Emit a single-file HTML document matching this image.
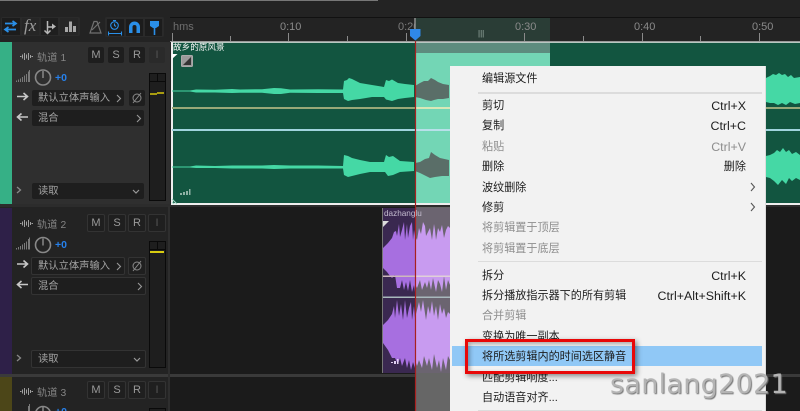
<!DOCTYPE html>
<html><head><meta charset="utf-8">
<style>
html,body{margin:0;padding:0;background:#232323;}
#p{position:relative;width:800px;height:411px;overflow:hidden;background:#232323;font-family:"Liberation Sans","Noto Sans CJK SC",sans-serif;}
.a{position:absolute;}
.t{position:absolute;white-space:nowrap;}
.b{position:absolute;width:16px;height:16px;background:#1e1e1e;border-radius:2px;color:#9a9a9a;font-size:11px;line-height:16px;text-align:center;}
.b2{background:#1f1f1f;border:1px solid #333;width:16px;height:16px;}
.d{position:absolute;background:#1e1e1e;border-radius:2px;color:#a4a4a4;font-size:10.3px;line-height:17px;height:16px;}
.d span{position:absolute;left:6px;top:0;white-space:nowrap;}
.d svg{position:absolute;}
.m{position:absolute;left:482px;font-size:11.1px;line-height:20px;height:20px;color:#1c1c1c;white-space:nowrap;}
.s{position:absolute;right:54px;font-size:12.4px;line-height:20px;height:20px;color:#1c1c1c;white-space:nowrap;}
.g{color:#8e8e8e;}
.sep{position:absolute;left:478px;width:284px;height:1px;background:#dcdcdc;}
.rl{position:absolute;top:21px;font-size:11px;color:#8a8a8a;}
</style></head><body>
<div id="p">
<!-- top bar -->
<div class="a" style="left:0;top:0;width:378px;height:1px;background:#777"></div>
<div class="a" style="left:1px;top:17px;width:79px;height:19px;background:#2a2a2a;border-radius:2px"></div>
<div class="a" style="left:105px;top:17px;width:59px;height:20px;background:#2a2a2a;border-radius:2px"></div>
<div class="a" style="left:2px;top:18px;width:18px;height:17px;background:#1c1c1c"></div>
<div class="a" style="left:22px;top:18px;width:17px;height:17px;background:#262626"></div>
<div class="a" style="left:41px;top:18px;width:17px;height:17px;background:#1f1f1f"></div>
<div class="a" style="left:60px;top:18px;width:18px;height:17px;background:#262626"></div>
<div class="a" style="left:107px;top:19px;width:17px;height:17px;background:#1c1c1c"></div>
<div class="a" style="left:126px;top:19px;width:17px;height:17px;background:#1c1c1c"></div>
<div class="a" style="left:145px;top:19px;width:17px;height:17px;background:#1c1c1c"></div>
<svg class="a" style="left:0;top:0" width="170" height="42" fill="none">
<path d="M5 23.500H15M12.500 21l3.500 2.500-3.500 2.500M16 29.500H6M8.500 27l-3.500 2.500 3.500 2.500" stroke="#2a8fe8" stroke-width="1.700"/>
<path d="M47.500 21V33M47.500 27H52M44.500 30.500l3 3 3-3" stroke="#b8b8b8" stroke-width="1.500"/><path d="M52 23.500l4 3-4 3z" fill="#b8b8b8"/>
<path d="M65 32V27h3v5zM69 32V21.500h3v10.500zM73 32V26h3v6z" fill="#a8a8a8"/>
<path d="M94 21.500h3l4 11.500H90zM92 30l8-8" stroke="#707070" stroke-width="1.200"/>
<circle cx="114.500" cy="25.500" r="3.800" stroke="#2a8fe8" stroke-width="1.100"/><path d="M114.500 23.500V25.500l1.500 1M113 20.500h3M108 33.500h14M108.500 31.500v4M121.500 31.500v4" stroke="#2a8fe8" stroke-width="1.100"/>
<path d="M129 33v-6a5.500 5.500 0 0 1 11 0v6h-3.500v-6a2 2 0 0 0-4 0v6z" fill="#2a8fe8"/>
<path d="M150 21h9v5l-3 2h-3l-3-2z" fill="#2a8fe8"/><path d="M154.500 28v7" stroke="#2a8fe8" stroke-width="1.600"/>
</svg>
<div class="t" style="left:24px;top:16px;font:italic 17px 'Liberation Serif',serif;color:#9c9c9c">fx</div>
<!-- ruler -->
<div class="a" style="left:170px;top:17px;width:630px;height:1px;background:#111"></div>
<div class="a" style="left:170px;top:18px;width:630px;height:23px;background:#232323"></div>
<div class="a" style="left:415px;top:18px;width:135px;height:23px;background:#2a3d36"></div>
<div class="t" style="left:173px;top:21px;font-size:11px;color:#6e6e6e">hms</div>
<div class="rl" style="left:280px">0:10</div>
<div class="a" style="left:398px;top:21px;width:17px;height:14px;overflow:hidden;font-size:11px;color:#7c7c7c">0:20</div>
<div class="rl" style="left:515px">0:30</div>
<div class="rl" style="left:634px">0:40</div>
<div class="rl" style="left:752px">0:50</div>
<div class="t" style="left:478px;top:29px;font-size:8px;color:#9fb0a8">|||</div>
<svg class="a" style="left:170px;top:18px" width="630" height="24">
<path d="M2.500 15V23M60.500 18V23M118.500 15V23M177.500 18V23M236.500 15V23M354.500 15V23M413.500 18V23M472.500 15V23M530.500 18V23M589.500 15V23" stroke="#8a8a8a"/>
</svg>
<div class="a" style="left:170px;top:41px;width:630px;height:1px;background:#9a9a9a"></div>
<!-- left panels -->
<div class="a" style="left:0;top:42px;width:170px;height:164px;background:#2f2f2f"></div>
<div class="a" style="left:0;top:42px;width:12px;height:164px;background:#36b086;border-bottom-left-radius:3px"></div>
<div class="a" style="left:0;top:206px;width:170px;height:169px;background:#232323"></div>
<div class="a" style="left:0;top:208px;width:12px;height:166px;background:#2e2048"></div>
<div class="a" style="left:0;top:376px;width:170px;height:35px;background:#232323"></div>
<div class="a" style="left:0;top:376px;width:12px;height:35px;background:#4c4618"></div>
<!-- timeline -->
<div class="a" style="left:170px;top:206px;width:630px;height:205px;background:#1b1b1b"></div>
<div class="a" style="left:0;top:204px;width:800px;height:3px;background:#2c2c2c"></div>
<div class="a" style="left:0;top:374px;width:800px;height:2.500px;background:#3a3a3a"></div>
<div class="a" style="left:168px;top:206px;width:2px;height:205px;background:#2e2e2e"></div>
<div class="a" style="left:415px;top:207px;width:35px;height:204px;background:#666"></div>
<!-- clip 1 -->
<div class="a" style="left:171px;top:42px;width:629px;height:163px;background:#125540"></div>
<div class="a" style="left:415px;top:42px;width:135px;height:163px;background:#73d6b5"></div>
<div class="a" style="left:415px;top:43px;width:135px;height:10px;background:#5d8c7e"></div>
<div class="a" style="left:171px;top:42px;width:629px;height:1px;background:#b8c8c2"></div>
<div class="a" style="left:171px;top:42px;width:1.500px;height:163px;background:#eee"></div>
<div class="a" style="left:171px;top:203px;width:629px;height:2px;background:#eee"></div>
<div class="a" style="left:172px;top:107px;width:243px;height:2px;background:#98a878"></div>
<div class="a" style="left:415px;top:107px;width:385px;height:2px;background:#d8e8b8"></div>
<div class="a" style="left:172px;top:129px;width:243px;height:2px;background:#a0d4de"></div>
<div class="a" style="left:415px;top:129px;width:385px;height:2px;background:#b8e0ea"></div>
<div class="a" style="left:765px;top:107px;width:35px;height:2px;background:#98a878"></div>
<div class="a" style="left:765px;top:129px;width:35px;height:2px;background:#a0d4de"></div>
<!-- clip 2 -->
<div class="a" style="left:382px;top:208px;width:33px;height:165px;background:#3a2850"></div>
<div class="a" style="left:415px;top:208px;width:35px;height:165px;background:#6b6470"></div>
<div class="a" style="left:381.500px;top:208px;width:1.500px;height:165px;background:#777"></div>
<svg class="a" style="left:0;top:0" width="800" height="411">
<path fill="#45d8a5" d="M172 90.500H190L196 89.500L215 89.800L232 89L240 89.500L262 89.200L274 88L281 88.300L290 89.500L318 89.200L343 89.500L344 81L347 80L349 78L352 79L356 81L360 83L366 84L372 85L384 87L386 80L389 81L392 79.500L398 83L405 84L414 85V97L405 98L398 99L392 101L388 100L386 99.500L384 97L372 97L360 99L352 100L348 101L344 99L343 93L318 93L290 92.800L281 94L274 94L262 92.800L240 92.800L232 93L215 92.500L196 92.500L190 91.500H172Z"/>
<path fill="#45d8a5" d="M172 166.500H190L196 165.500L215 166L232 165.500L262 165.500L274 165L290 165.500L318 165.500L343 166L344 155L348 156L352 158L360 160L370 162L384 162L386 155L389 157L393 156L400 161L414 162V171L400 172L393 175L388 176L385 172L370 172L360 174L352 176L348 177L344 175L343 168.500L318 168.500L290 168.500L274 169L262 168.500L232 168.500L215 168L196 168L190 167.500H172Z"/>
<path fill="#5a6e68" d="M415 86L420 83L424 81L428 81L431 78L435 80L438 82L443 84L449 85V98L443 99L438 99L434 100L431 101L426 100L420 98L415 97Z"/>
<path fill="#5a6e68" d="M415 163L420 162L425 159L429 158L431 152L435 155L440 158L449 160V176L442 176L435 177L430 178L426 176L420 173L415 171Z"/>
<path fill="#45d8a5" d="M766 78L770 76L773 74L776 75L779 73L782 75L785 74L788 77L791 75L794 78L800 77V103L795 104L790 102L786 105L782 103L778 105L774 103L770 103L766 102Z"/>
<path fill="#45d8a5" d="M766 156L770 155L774 153L777 150L780 152L783 148L786 152L789 150L792 154L796 152L800 155V180L796 178L792 181L789 178L786 184L782 180L778 185L774 181L770 178L766 177Z"/>
<!-- purple -->
<path fill="#a76fe0" d="M383 248L388 243L392 238L394 232L396 231L397 236L399 224L400 237L402 230L404 222L405 240L407 224L408 238L410 226L412 222L413 240L414 230L415 236V292L414 285L412 292L410 280L408 291L406 282L404 290L402 280L400 288L397 288L395 275L392 278L390 276L387 272L383 268Z"/>
<path fill="#c89bf0" d="M415 236L417 240L419 228L421 234L423 222L425 226L426 236L428 232L430 228L432 240L434 224L435 230L436 240L438 228L440 232L442 225L444 238L446 230L448 226L450 228V285L448 280L446 290L444 276L442 292L440 284L438 280L436 292L433 278L431 290L429 280L427 288L425 282L422 290L420 280L417 288L415 284Z"/>
<path fill="#a76fe0" d="M383 325L388 320L392 314L394 306L395 318L397 300L399 316L401 304L403 320L405 300L407 318L409 308L411 302L412 320L414 306L415 318V368L413 362L411 370L409 360L407 368L405 358L402 366L400 358L398 364L395 358L392 358L388 350L383 343Z"/>
<path fill="#c89bf0" d="M415 318L417 310L419 302L421 312L423 300L426 320L428 306L430 314L432 301L434 316L436 306L438 320L440 304L442 314L444 308L446 318L448 312L450 314V360L448 356L446 370L443 358L441 372L439 360L437 368L434 354L432 370L429 358L427 366L424 356L422 368L419 360L417 366L415 360Z"/>
<path d="M383 276.200H415" stroke="#cdb8bc" stroke-width="1.500"/><path d="M415 276.200H450" stroke="#e0d0d8" stroke-width="1.500"/>
<path d="M383 297.200H450" stroke="#a8b8bc" stroke-width="1.500"/>
<path d="M172 54h5.500l-5.500 5z" fill="#fff"/>
<path d="M383 221h6l-6 6z" fill="#ddd"/>
<rect x="181.500" y="55.500" width="11" height="11" rx="1" fill="#9a9a9a" stroke="#aaa"/>
<path d="M183 65L191 57V65z" fill="#333"/>
<path d="M180 195v-2h2v2zM183 195v-3h2v3zM186 195v-4h2v4zM189 195v-6h1.500v6z" fill="#8fb0a4"/>
<path d="M172 199l5 5M172 202l2 2" stroke="#9fd8c4"/>
<path d="M391 363v-1h2v1zM394 364v-3h2v3zM397 364v-5h1.500v5z" fill="#e0d0f0"/>
<!-- playhead -->
<path d="M415 18V30" stroke="#8f8f8f" stroke-width="1.500"/>
<path d="M415.500 41V411" stroke="#a82020" stroke-width="1.200"/>
<path d="M410 29h10.500v7l-5.200 4.500L410 36z" fill="#2f88e8"/>
</svg>
<div class="t" style="left:173px;top:41px;font-size:8.600px;color:#f4f4f4">故乡的原风景</div>
<div class="t" style="left:384px;top:209px;font-size:8.200px;color:#c4bccf">dazhanglu</div>

<!-- track controls drawings -->
<svg class="a" style="left:0;top:0" width="170" height="411" fill="none">
<path d="M20 56.500h1.500M22.500 54.500v4M24.500 53v7M26.500 54.500v4M28.500 53v7M30.500 55v3M31.500 56.500h1.500" stroke="#a0a0a0"/>
<path d="M20 223.500h1.500M22.500 221.500v4M24.500 220v7M26.500 221.500v4M28.500 220v7M30.500 222v3M31.500 223.500h1.500" stroke="#a0a0a0"/>
<path d="M20 391.500h1.500M22.500 389.500v4M24.500 388v7M26.500 389.500v4M28.500 388v7M30.500 390v3M31.500 391.500h1.500" stroke="#a0a0a0"/>
<path d="M16.500 82V80.500M18.500 82V79.500M20.500 82V78.500M22.500 82V77M24.500 82V75.500M26.500 82V74M28.500 82V71.500M29.500 82V70" stroke="#7a7a7a"/>
<path d="M16.500 249.500V248M18.500 249.500V247M20.500 249.500V246M22.500 249.500V244.500M24.500 249.500V243M26.500 249.500V241.500M28.500 249.500V239M29.500 249.500V237.500" stroke="#7a7a7a"/>
<path d="M28.500 406V411M29.500 404V411" stroke="#7a7a7a"/>
<circle cx="43" cy="77.500" r="7.500" stroke="#888" stroke-width="1.600"/><path d="M43 71V78" stroke="#888" stroke-width="1.500"/>
<circle cx="43" cy="245" r="7.500" stroke="#888" stroke-width="1.600"/><path d="M43 238.500V245.500" stroke="#888" stroke-width="1.500"/>
<circle cx="43" cy="414" r="7.500" stroke="#888" stroke-width="1.600"/><path d="M43 407V414" stroke="#888" stroke-width="1.500"/>
<path d="M17 96.500H27M23.500 93l4 3.500-4 3.500" stroke="#c8c8c8" stroke-width="1.600"/>
<path d="M17 264H27M23.500 260.500l4 3.500-4 3.500" stroke="#c8c8c8" stroke-width="1.600"/>
<path d="M28 117H18M21.500 113.500l-4 3.500 4 3.500" stroke="#c8c8c8" stroke-width="1.600"/>
<path d="M28 284.500H18M21.500 281l-4 3.500 4 3.500" stroke="#c8c8c8" stroke-width="1.600"/>
<path d="M17 187l3.500 3-3.500 3" stroke="#888" stroke-width="1.300"/>
<path d="M17 355l3.500 3-3.500 3" stroke="#888" stroke-width="1.300"/>
</svg>
<div class="t" style="left:37px;top:49px;font-size:10.300px;color:#858585">轨道 1</div>
<div class="b" style="left:88px;top:47px">M</div><div class="b" style="left:108px;top:47px">S</div><div class="b" style="left:129px;top:47px">R</div><div class="b" style="left:149px;top:47px;background:#2a2a2a;color:#555">I</div>
<div class="t" style="left:55px;top:72px;font-size:10.500px;font-weight:bold;color:#2680eb">+0</div>
<div class="d" style="left:32px;top:90px;width:92px"><span>默认立体声输入</span><svg style="left:84px;top:4px" width="6" height="9" fill="none"><path d="M1 1l3.500 3.500L1 8" stroke="#999" stroke-width="1.100"/></svg></div>
<div class="b" style="left:129px;top:90px"><svg class="a" style="left:2px;top:2px" width="12" height="12" fill="none"><circle cx="6" cy="6" r="4" stroke="#8a8a8a"/><path d="M2 11L10 1" stroke="#8a8a8a"/></svg></div>
<div class="d" style="left:32px;top:110px;width:112px"><span>混合</span><svg style="left:104px;top:4px" width="6" height="9" fill="none"><path d="M1 1l3.500 3.500L1 8" stroke="#999" stroke-width="1.100"/></svg></div>
<div class="d" style="left:32px;top:183px;width:112px"><span>读取</span><svg style="left:100px;top:6px" width="8" height="5" fill="none"><path d="M1 1l3 3 3-3" stroke="#999" stroke-width="1.200"/></svg></div>
<div class="a" style="left:149px;top:73px;width:15px;height:126px;background:#1e1e1e;border:1px solid #0a0a0a"></div>
<div class="a" style="left:150px;top:81px;width:15px;height:1px;background:#0a0a0a"></div>
<div class="a" style="left:157px;top:74px;width:1px;height:7px;background:#0a0a0a"></div>
<div class="a" style="left:150px;top:93px;width:7px;height:2px;background:#a89c10"></div>
<div class="a" style="left:157px;top:91.500px;width:7px;height:2px;background:#a89c10"></div>

<!-- track 2 controls -->
<div class="t" style="left:37px;top:216px;font-size:10.300px;color:#858585">轨道 2</div>
<div class="b b2" style="left:87px;top:214px">M</div><div class="b b2" style="left:108px;top:214px">S</div><div class="b b2" style="left:128px;top:214px">R</div><div class="b b2" style="left:148px;top:214px;color:#555">I</div>
<div class="t" style="left:55px;top:239px;font-size:10.500px;font-weight:bold;color:#2680eb">+0</div>
<div class="d" style="left:31px;top:257px;width:92px;border:1px solid #333"><span>默认立体声输入</span><svg style="left:84px;top:4px" width="6" height="9" fill="none"><path d="M1 1l3.500 3.500L1 8" stroke="#999" stroke-width="1.100"/></svg></div>
<div class="b b2" style="left:128px;top:257px"><svg class="a" style="left:2px;top:2px" width="12" height="12" fill="none"><circle cx="6" cy="6" r="4" stroke="#8a8a8a"/><path d="M2 11L10 1" stroke="#8a8a8a"/></svg></div>
<div class="d" style="left:31px;top:277px;width:113px;border:1px solid #333"><span>混合</span><svg style="left:105px;top:4px" width="6" height="9" fill="none"><path d="M1 1l3.500 3.500L1 8" stroke="#999" stroke-width="1.100"/></svg></div>
<div class="d" style="left:31px;top:350px;width:113px;border:1px solid #333"><span>读取</span><svg style="left:101px;top:6px" width="8" height="5" fill="none"><path d="M1 1l3 3 3-3" stroke="#999" stroke-width="1.200"/></svg></div>
<div class="a" style="left:149px;top:241px;width:15px;height:125px;background:#1e1e1e;border:1px solid #0a0a0a"></div>
<div class="a" style="left:150px;top:249px;width:15px;height:1px;background:#0a0a0a"></div>
<div class="a" style="left:157px;top:242px;width:1px;height:7px;background:#0a0a0a"></div>
<div class="a" style="left:150px;top:251px;width:14px;height:1.500px;background:#d8cc10"></div>

<!-- track 3 controls -->
<div class="t" style="left:37px;top:384px;font-size:10.300px;color:#858585">轨道 3</div>
<div class="b b2" style="left:87px;top:381px">M</div><div class="b b2" style="left:108px;top:381px">S</div><div class="b b2" style="left:128px;top:381px">R</div><div class="b b2" style="left:148px;top:381px;color:#555">I</div>
<div class="t" style="left:55px;top:406px;font-size:10.500px;font-weight:bold;color:#2680eb">+0</div>
<div class="a" style="left:149px;top:408px;width:15px;height:8px;background:#1e1e1e;border:1px solid #0a0a0a"></div>

<!-- context menu -->
<div class="a" style="left:450px;top:66px;width:314.500px;height:345px;background:#f2f2f2;box-shadow:1px 0 0 #dcdcdc"></div>
<div class="m" style="top:69px">编辑源文件</div>
<div class="sep" style="top:92px;height:2px"></div>
<div class="m" style="top:96px">剪切</div><div class="s" style="top:96px">Ctrl+X</div>
<div class="m" style="top:116px">复制</div><div class="s" style="top:116px">Ctrl+C</div>
<div class="m g" style="top:137px">粘贴</div><div class="s g" style="top:137px">Ctrl+V</div>
<div class="m" style="top:157px">删除</div><div class="s" style="top:157px;font-size:11.100px">删除</div>
<div class="m" style="top:178px">波纹删除</div>
<div class="m" style="top:198px">修剪</div>
<svg class="a" style="left:749px;top:182px" width="7" height="30" fill="none"><path d="M2 1l3.500 4L2 9M2 21l3.500 4L2 29" stroke="#555" stroke-width="1.100"/></svg>
<div class="m g" style="top:218px">将剪辑置于顶层</div>
<div class="m g" style="top:239px">将剪辑置于底层</div>
<div class="sep" style="top:261px"></div>
<div class="m" style="top:266px">拆分</div><div class="s" style="top:266px">Ctrl+K</div>
<div class="m" style="top:286px">拆分播放指示器下的所有剪辑</div><div class="s" style="top:286px">Ctrl+Alt+Shift+K</div>
<div class="m g" style="top:306px">合并剪辑</div>
<div class="m" style="top:327px">变换为唯一副本</div>
<div class="a" style="left:452px;top:346px;width:310px;height:20px;background:#90c8f6"></div>
<div class="m" style="top:347px">将所选剪辑内的时间选区静音</div>
<div class="m" style="top:368px">匹配剪辑响度...</div>
<div class="m" style="top:388px">自动语音对齐...</div>
<div class="sep" style="top:410px"></div>
<!-- red box -->
<div class="a" style="left:465px;top:339px;width:164px;height:29px;border:3px solid #e80808;box-shadow:2px 2px 5px rgba(0,0,0,.45),inset 2px 2px 4px rgba(0,0,0,.3)"></div>
<!-- watermark -->
<div class="t" style="left:610px;top:369px;font:27px 'DejaVu Sans',sans-serif;letter-spacing:.3px;color:#b4b4b4;text-shadow:1px 1px 1px #777">sanlang2021</div>
</div>
</body></html>
